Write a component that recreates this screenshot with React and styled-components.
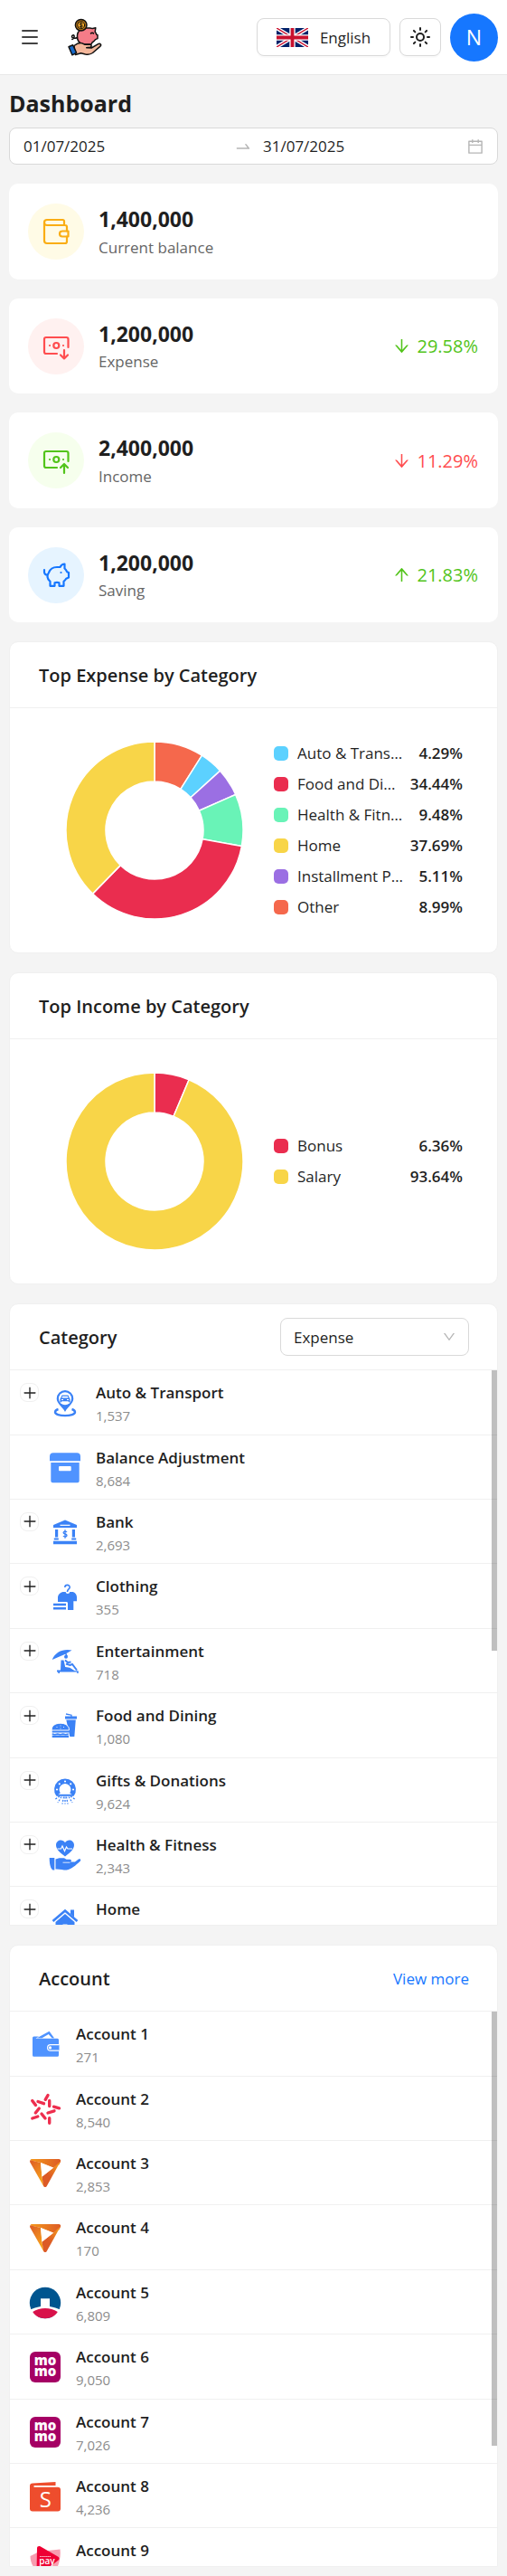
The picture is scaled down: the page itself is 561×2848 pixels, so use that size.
import React from "react";
import styled, { createGlobalStyle } from "styled-components";
import {
  AiOutlineArrowDown,
  AiOutlineArrowUp,
  AiOutlineCalendar,
  AiOutlineDown,
  AiOutlinePlus,
  AiOutlineSwapRight,
} from "react-icons/ai";
import { Sun } from "lucide-react";

const GlobalStyle = createGlobalStyle`
  *, *::before, *::after { box-sizing: border-box; }
  body {
    margin: 0;
    background: #f4f4f4;
    color: #1f1f1f;
    font-family: "Open Sans", "Noto Sans", sans-serif;
    font-size: 17px;
  }
  button, input, select { font: inherit; color: inherit; }
  h1, h2, p, ul { margin: 0; padding: 0; }
  ul { list-style: none; }
`;

/* ---------- Header ---------- */

const Header = styled.header`
  display: flex;
  align-items: center;
  gap: 10px;
  height: 83px;
  padding: 0 10px;
  background: #fff;
  border-bottom: 1px solid #e8e8e8;
`;

const MenuButton = styled.button`
  display: flex;
  padding: 10px 14px;
  border: 0;
  background: none;
`;

const Brand = styled.a`
  display: flex;
  margin-left: 9px;
  margin-right: auto;
`;

const HeaderButton = styled.button`
  display: flex;
  align-items: center;
  justify-content: center;
  gap: 13px;
  height: 42px;
  padding: 0 ${(p) => (p.$wide ? 20 : 10)}px;
  min-width: ${(p) => (p.$wide ? 148 : 46)}px;
  background: #fff;
  border: 1px solid #d9d9d9;
  border-radius: 8px;
  box-shadow: 0 2px 0 rgba(0, 0, 0, 0.02);
`;

const Avatar = styled.button`
  width: 53px;
  height: 53px;
  padding: 0;
  border: 0;
  border-radius: 50%;
  background: #1677ff;
  color: #fff;
  font-size: 23px;
`;

/* ---------- Page ---------- */

const Main = styled.main`
  display: flex;
  flex-direction: column;
  gap: 21px;
  padding: 13px 10px 10px;
`;

const Intro = styled.div`
  display: flex;
  flex-direction: column;
  gap: 9px;
`;

const PageTitle = styled.h1`
  font-size: 25px;
  line-height: 36px;
  font-weight: 700;
`;

const RangePicker = styled.div`
  display: flex;
  align-items: center;
  gap: 12px;
  height: 41px;
  padding: 0 14px 0 15px;
  background: #fff;
  border: 1px solid #d9d9d9;
  border-radius: 8px;
  color: #b5b5b5;
  svg { flex: none; }
`;

const DateField = styled.label`
  flex: 1 1 ${(p) => (p.$withIcon ? 24 : 0)}px;
  min-width: 0;
  display: flex;
  align-items: center;
`;

const DateInput = styled.input`
  flex: 1;
  min-width: 0;
  padding: 0;
  border: 0;
  outline: 0;
  background: none;
  color: #1f1f1f;
`;

/* ---------- Stat cards ---------- */

const StatCard = styled.section`
  display: flex;
  align-items: center;
  gap: 16px;
  padding: 22px 22px 21px 21px;
  background: #fff;
  border-radius: 10px;
`;

const StatIcon = styled.span`
  display: flex;
  align-items: center;
  justify-content: center;
  width: 62px;
  height: 62px;
  border-radius: 50%;
  background: ${(p) => p.$bg};
  color: ${(p) => p.$fg};
`;

const StatText = styled.div`
  flex: 1;
`;

const StatValue = styled.p`
  font-size: 23px;
  line-height: 1.5;
  font-weight: 700;
`;

const StatLabel = styled.p`
  line-height: 1.65;
  color: #666;
`;

const Trend = styled.span`
  display: flex;
  align-items: center;
  gap: 6px;
  font-size: 20px;
  font-weight: 500;
  color: ${(p) => (p.$good ? "#52c41a" : "#ff4d4f")};
`;

/* ---------- Panels ---------- */

const Panel = styled.section`
  background: #fff;
  border: 1px solid #f0f0f0;
  border-radius: ${(p) => (p.$flatBottom ? "10px 10px 0 0" : "10px")};
`;

const PanelHeader = styled.header`
  display: flex;
  align-items: center;
  justify-content: space-between;
  height: 73px;
  padding: 0 31px 0 32px;
  border-bottom: 1px solid #f0f0f0;
`;

const PanelTitle = styled.h2`
  font-size: 20px;
  font-weight: 600;
`;

const ChartBody = styled.div`
  display: flex;
  align-items: center;
  gap: 34px;
  height: 270px;
  padding: 0 38px 0 62px;
`;

const Legend = styled.ul`
  flex: 1;
  min-width: 0;
  display: flex;
  flex-direction: column;
  gap: 10px;
`;

const LegendRow = styled.li`
  display: flex;
  align-items: center;
  line-height: 24px;
`;

const Swatch = styled.span`
  flex: none;
  width: 16px;
  height: 16px;
  margin-right: 10px;
  border-radius: 5px;
  background: ${(p) => p.$color};
`;

const LegendLabel = styled.span`
  flex: 1;
  min-width: 0;
  overflow: hidden;
  white-space: nowrap;
  text-overflow: ellipsis;
`;

const LegendValue = styled.span`
  margin-left: 14px;
  font-weight: 600;
`;

const SelectBox = styled.span`
  position: relative;
  display: flex;
  align-items: center;
  width: 209px;
  svg {
    position: absolute;
    right: 14px;
    color: #b5b5b5;
    pointer-events: none;
  }
`;

const Select = styled.select`
  appearance: none;
  width: 100%;
  height: 42px;
  padding: 0 14px;
  background: #fff;
  border: 1px solid #d9d9d9;
  border-radius: 8px;
`;

const MoreLink = styled.a`
  color: #1677ff;
  text-decoration: none;
`;

const ListViewport = styled.div`
  position: relative;
  height: 613px;
  overflow: hidden;
`;

const ScrollThumb = styled.span`
  position: absolute;
  top: 0;
  right: 0;
  width: 6px;
  height: ${(p) => p.$size}px;
  background: rgba(0, 0, 0, 0.25);
`;

const ListRow = styled.li`
  display: flex;
  align-items: center;
  padding: 11px 10px 9px ${(p) => (p.$nested ? 11 : 21)}px;
  border-bottom: 1px solid #f0f0f0;
`;

const ExpandSlot = styled.span`
  align-self: flex-start;
  width: 32px;
  padding-top: 3px;
`;

const ExpandButton = styled.button`
  display: flex;
  align-items: center;
  justify-content: center;
  width: 21px;
  height: 21px;
  padding: 0;
  background: #fff;
  border: 1px solid #f0f0f0;
  border-radius: 8px;
  svg { flex: none; }
`;

const RowIcon = styled.svg`
  flex: none;
  width: 36px;
  height: 36px;
  margin-right: 16px;
`;

const RowName = styled.p`
  line-height: 1.65;
  font-weight: 600;
`;

const RowAmount = styled.p`
  font-size: 15px;
  line-height: 1.49;
  color: #8c8c8c;
`;

/* ---------- Header drawings ---------- */

const MenuIcon = () => (
  <svg width="18" height="16" viewBox="0 0 18 16" stroke="#434343" strokeWidth="2" strokeLinecap="round">
    <path d="M1 1h16M1 8h16M1 15h16" />
  </svg>
);

const Logo = () => (
  <svg width="38" height="42" viewBox="0 0 38 42" stroke="#111" strokeWidth="1.5" strokeLinejoin="round" strokeLinecap="round">
    <path d="M10.500 19c.5-4.500 4-8 9-8h5c1 0 2 .3 3 .6l3.300-.8-.6 4.400c.8.900 1.200 1.900 1.600 3l1.200.4v4l-2.400 1c-1 1.500-2.200 2.600-3.600 3.400l-1 2h-9.500c-4-1.500-6.500-5-6-10z" fill="#f57c88" />
    <path d="M25.500 17c.6-1 2.400-1 3 0" fill="none" />
    <path d="M10.500 21.500c-3 1.500-6 .5-6-1s2-2.300 2.600-.9c.5 1.300-.9 3.200-2.300 3.900" fill="none" />
    <circle cx="14.700" cy="7.700" r="6.300" fill="#b87412" />
    <circle cx="14.700" cy="7.700" r="4" fill="#f7a928" strokeWidth="1" />
    <path d="M16.300 6c-1-.9-3-.7-3 .6 0 1.500 3 .8 3 2.300 0 1.300-2 1.500-3.100.5M14.800 4.800v5.900" fill="none" strokeWidth=".9" />
    <path d="M7 30.500c3-2.300 6-3.500 9-2.600l3 1.300h5.500c2 0 2.300 2.600.2 3l-4 .5 5.500.3 7.500-4.300c2-1 3.900.6 2.300 2.400l-8.500 7.400c-2.500 1.700-5 2-8 1.400l-5-1.200-6 1.800z" fill="#f4b79b" />
    <path d="M1 31.800l4.600-2.100 4 8.600-4.700 2.500z" fill="#1769c9" />
  </svg>
);

const Flag = () => (
  <svg width="35" height="21" viewBox="0 0 60 36" preserveAspectRatio="none">
    <path fill="#012169" d="M0 0h60v36H0z" />
    <path d="M0 0l60 36M60 0L0 36" stroke="#fff" strokeWidth="7" />
    <path d="M0 0l60 36M60 0L0 36" stroke="#c8102e" strokeWidth="2.500" />
    <path d="M30 0v36M0 18h60" stroke="#fff" strokeWidth="11" />
    <path d="M30 0v36M0 18h60" stroke="#c8102e" strokeWidth="6.500" />
  </svg>
);

/* ---------- Stat drawings ---------- */

const strokeProps = {
  width: 32,
  height: 32,
  viewBox: "0 0 32 32",
  fill: "none",
  stroke: "currentColor",
  strokeWidth: 2.2,
  strokeLinecap: "round",
  strokeLinejoin: "round",
};

const WalletIcon = () => (
  <svg {...strokeProps}>
    <path d="M25 9V4.500a1.500 1.500 0 0 0-1.500-1.500H6a3 3 0 0 0 0 6h20a2 2 0 0 1 2 2v4.500M28 21.500V27a2 2 0 0 1-2 2H6a3 3 0 0 1-3-3V6" />
    <path d="M29.500 15.500v6h-6.500a3 3 0 0 1 0-6z" />
  </svg>
);

const CashIcon = ({ up }) => (
  <svg {...strokeProps}>
    <path d="M17 24H5a2 2 0 0 1-2-2V8a2 2 0 0 1 2-2h22.500a2 2 0 0 1 2 2v9" />
    <circle cx="16.300" cy="15" r="3" />
    <path d="M9 15h.01M24 15h.01" />
    <path d={up ? "M25 30v-9.500M21 24l4-4 4 4" : "M25 20v9.500M21 25.500l4 4 4-4"} />
  </svg>
);

const PigIcon = () => (
  <svg {...strokeProps}>
    <path d="M3 10v2.500a3 3 0 0 0 3 3M8 13c1.500-4 5-6 9-6h3.500c1-2 3-3.500 5-3.500v5c1.200 1 2 2.200 2.600 3.700l1.900.8v5.500l-2.800 1.200c-.8 1.400-1.700 2.300-2.700 3.100v5h-5v-3.500c-1.500-.6-3.500-.6-5 0v3.500h-5v-5c-3-2.500-4-6-1.500-9.800z" />
    <path d="M21.500 13h.01" />
  </svg>
);

/* ---------- Donut chart ---------- */

const DonutSvg = styled.svg`
  flex: none;
  width: 196px;
  height: 196px;
`;

const point = (r, share) => {
  const a = share * 2 * Math.PI;
  return `${(98 + r * Math.sin(a)).toFixed(2)} ${(98 - r * Math.cos(a)).toFixed(2)}`;
};

const Donut = ({ slices, label }) => {
  let at = 0;
  return (
    <DonutSvg viewBox="0 0 196 196" role="img" aria-label={label}>
      {slices.map((s) => {
        const from = at;
        const to = (at += s.value / 100);
        const big = to - from > 0.5 ? 1 : 0;
        return (
          <path
            key={s.name}
            fill={s.color}
            stroke="#fff"
            strokeWidth="1.500"
            d={`M${point(98, from)}A98 98 0 ${big} 1 ${point(98, to)}L${point(54, to)}A54 54 0 ${big} 0 ${point(54, from)}Z`}
          />
        );
      })}
    </DonutSvg>
  );
};

/* ---------- Category drawings (36 x 36) ---------- */

const BLUE = "#3b82f6";

const icons = {
  transport: (
    <>
      <path fill={BLUE} d="M18 4a9.300 9.300 0 0 0-9.300 9.300c0 5.700 6.300 8.700 9.300 14.700 3-6 9.300-9 9.300-14.700A9.300 9.300 0 0 0 18 4z" />
      <circle cx="18" cy="13.300" r="7" fill="#fff" />
      <path fill={BLUE} d="M14.500 9.500h7l1.300 3 .7.800v4h-1.700v-1h-7.600v1h-1.700v-4l.7-.8zm.6 1.200l-.7 1.800h7.200l-.7-1.800zM14 14v1h2v-1zm6 0v1h2v-1z" />
      <path fill="none" stroke={BLUE} strokeWidth="2.400" d="M10.500 25c-2.300.7-3.500 1.800-3.500 3.200 0 2.300 5 3.900 11 3.900s11-1.600 11-3.900c0-1.400-1.200-2.500-3.500-3.200" />
    </>
  ),
  balance: (
    <g fill="#4f93ff">
      <path d="M5 1.300h26a4 4 0 0 1 4 4v5H1v-5a4 4 0 0 1 4-4z" />
      <path fillRule="evenodd" d="M2.300 12h31.400v20.300a2 2 0 0 1-2 2H4.300a2 2 0 0 1-2-2zM12 16a1 1 0 0 0-1 1v3.300a1 1 0 0 0 1 1h11.700a1 1 0 0 0 1-1V17a1 1 0 0 0-1-1z" />
    </g>
  ),
  bank: (
    <>
      <path fill={BLUE} d="M18 4.500L31 10v3H5v-3zM7 15h3.200v8.500H7zM25.800 15H29v8.500h-3.200zM5.800 24.500h5v2h-5zM25.200 24.500h5v2h-5zM5 27.800h26v3.500H5z" />
      <path stroke="#fff" strokeWidth="1.200" d="M12.500 10.300h11" />
      <path fill="none" stroke={BLUE} strokeWidth="1.300" d="M20 17.800c-1-1.200-3.900-1-3.900.8s3.900 1 3.900 2.900-2.900 1.900-4.100.6M18 15.200v9.500" />
    </>
  ),
  clothing: (
    <>
      <path fill="none" stroke={BLUE} strokeWidth="1.600" d="M17.800 7c0-3.500 5.600-3.500 5.400 0-.1 2-3 2-2.700 5" />
      <path fill={BLUE} d="M15.500 12h3.200c0 2.500 4.500 2.500 4.500 0h3.500c2.500.8 4 2.500 4.300 5.500v4.700h-3.700V32H21v-7.500c0-1.300-1-1.500-2-1.500h-9v-5.500c.5-3 2.500-4.700 5.500-5.500zM5 24.700h14v2.600H5zM5 29h14v2.600H5z" />
    </>
  ),
  entertainment: (
    <>
      <path fill={BLUE} d="M3.700 16C7 7.500 16 3.500 25.500 5.500l-6 3.500 1.200 3-1.500.4-1-2.600zM13.500 16.500h3l1.700 7.500 5 .8 5.500 3.500h4V31h-1.500v-1.400H12V31h-1.700v-1.500H9v-2h4z" />
      <circle cx="19" cy="12.800" r="2" fill={BLUE} />
      <path fill="none" stroke={BLUE} strokeWidth="2" d="M18 16.500l3 2.500 3.500-.5M19 20.500l4.500 1.500 2.500-1 5 6.500" />
    </>
  ),
  food: (
    <>
      <path fill={BLUE} d="M18 7.500h13v3H18zM19.300 11.500h10.500L28.300 30h-5z" />
      <path fill="none" stroke={BLUE} strokeWidth="1.300" d="M19 5l6 1.200v3" />
      <path fill={BLUE} stroke="#fff" strokeWidth="1" d="M3.200 23c-.5-5 4-7.800 9.600-7.800S22.900 18 22.400 23z" />
      <path fill={BLUE} d="M3.700 23.500h18.300v2H3.700zM3.700 28.500h18.300V31H3.700z" />
      <path fill="none" stroke={BLUE} strokeWidth="1.400" d="M3.700 27l3 .8 3-.8 3 .8 3-.8 3 .8 3-.8" />
      <path stroke="#fff" strokeWidth="1" strokeLinecap="round" d="M9 19.500h.01M13 18h.01M16.500 19.500h.01M13 21h.01" />
    </>
  ),
  gifts: (
    <>
      <path fill="none" stroke={BLUE} strokeWidth="5.500" d="M10.500 21.800a9.200 9.200 0 1 1 15 0" />
      <path fill="none" stroke={BLUE} strokeWidth="2" d="M8.500 22.800h19" />
      <path fill="none" stroke="#fff" strokeWidth="2.200" strokeLinecap="round" d="M18 7.500h.01M11.800 10.300h.01M24.200 10.300h.01M9 16.500h.01M27 16.500h.01" />
      <path fill="none" stroke={BLUE} strokeWidth="1.300" strokeDasharray="2 1.500" d="M12 24l-5.500 3.500M14 24.500L10 31M16.500 24.500l-1.500 8M19.500 24.500l1.500 8M22 24.500l4 6.500M24 24l5.500 3.500M18 24.500v8" />
    </>
  ),
  health: (
    <>
      <path fill={BLUE} d="M18 19.500C12 15 8 11.500 8 6.800 8 1 15.500-.5 18 4.200c2.500-4.700 10-3.200 10 2.600 0 4.700-4 8.200-10 12.700z" />
      <path fill="none" stroke="#fff" strokeWidth="1.200" d="M9.500 11h4l1.500-3 2.500 5.500 2-4.500 1.500 2H26" />
      <path fill={BLUE} d="M.7 21h5.600v13.500H4.500C2 33 .7 28 .7 21zM7.500 22.500l4-1.200h5.500l2.500 1.500h4c1.600 0 2 2.400.4 2.800h5l4-3c1.800-.9 3.200.8 1.800 2.200-5 4.500-10 9.200-15 9.700-4 0-8-1.300-12.200-1z" />
      <path stroke="#fff" strokeWidth=".8" d="M15.500 26.200h8" />
    </>
  ),
  home: (
    <>
      <path fill="none" stroke={BLUE} strokeWidth="2.600" d="M4.500 19L18 7.500 31.500 19" />
      <path fill={BLUE} d="M24 6.500h4v8l-4-3.500zM18 11l10.500 9v12h-8V22.500h-5V32h-8V20z" />
    </>
  ),
  wallet: (
    <>
      <path fill="#4f93ff" d="M12 9.500L22.500 3.700l5.500 7.500h-2.500l-3.800-4.200-7.200 4.200H9zM5.500 9.500H11l-3.500 2.200h24a1.500 1.500 0 0 1 1.500 1.500v17a1.500 1.500 0 0 1-1.500 1.500h-26A1.500 1.500 0 0 1 4 30.200V11a1.500 1.500 0 0 1 1.500-1.500z" />
      <path fill="#4f93ff" stroke="#fff" strokeWidth="1.200" d="M33.500 18.700H23.800a3.200 3.200 0 0 0 0 6.400h9.700" />
      <circle cx="23.500" cy="21.900" r="1.600" fill="#fff" />
    </>
  ),
  star: (
    <path
      fill="none"
      stroke="#ee2e4e"
      strokeWidth="3.400"
      strokeLinecap="round"
      d="M21 2.500l-2.800 4.800M3.700 8.500l3.800 5M10 9.500l6.500 2.200M22.700 8.500v6M27.500 15.200l6 1.600M11.300 17l-4 5M28 19.800l-7 2.200M3.800 28l6-2M14 23l4 5M22.700 27.800v5.400"
    />
  ),
  triangle: (
    <>
      <defs>
        <linearGradient id="triTop" x1="0" x2="1">
          <stop offset="0" stopColor="#f59a1b" />
          <stop offset="1" stopColor="#dc5a26" />
        </linearGradient>
        <linearGradient id="triLeft" x1="0" y1="0" x2=".6" y2="1">
          <stop offset="0" stopColor="#dc5a26" />
          <stop offset="1" stopColor="#f9a51a" />
        </linearGradient>
        <linearGradient id="triRight" x1="1" y1="0" x2="0" y2="1">
          <stop offset="0" stopColor="#f9a51a" />
          <stop offset=".6" stopColor="#dc5a26" />
        </linearGradient>
      </defs>
      <path fill="url(#triTop)" d="M3 2h30c1.800 0 2.700 1.500 2 3l-1.500 3-6.500 3.500L13 6 1.500 3.500C1.800 2.500 2.300 2 3 2z" />
      <path fill="url(#triLeft)" d="M1.500 3.200L13 6l1.500 16 2 10.500L1.200 5.500c-.3-.8-.2-1.700.3-2.300z" />
      <path fill="url(#triRight)" d="M27 11.500L35 4.500 20 31.500c-1 2-3 2-4 0l-1.500-10z" />
      <path fill="#fff" d="M13 6l14 5.700-12.500 9.800z" />
    </>
  ),
  harbour: (
    <>
      <circle cx="18" cy="18" r="17.200" fill="#00558f" />
      <path fill="#fff" d="M13 13.300h10V22c4.500.8 8.500 2 11.500 3.500L30 33H6L1.500 25.500C4.500 24 8.500 22.800 13 22z" />
      <path fill="#d8114a" d="M4.200 28c8-5.400 19.600-5.400 27.600 0-6 9.600-21.600 9.600-27.600 0z" />
    </>
  ),
  momo: (
    <>
      <rect x="1" y="1" width="34" height="34" rx="6" fill="#a50064" />
      <g fill="#fff" fontFamily="Open Sans" fontWeight="800" fontSize="15" textAnchor="middle">
        <text x="18" y="16">mo</text>
        <text x="18" y="28">mo</text>
      </g>
    </>
  ),
  shop: (
    <>
      <path fill="#ee4d2d" d="M1 6.500C1 4.500 2 3.700 4 3.500L29.500 2v4H5.500v1.800H32a3 3 0 0 1 3 3v20.700a3 3 0 0 1-3 3H4a3 3 0 0 1-3-3z" />
      <text x="18.300" y="30" fill="#fff" fontFamily="Open Sans" fontSize="24" textAnchor="middle">S</text>
    </>
  ),
  pay: (
    <>
      <path fill="#f79db0" d="M1.500 12l10-5 23-2.500c1 8-1 16-4 22L8 27c-4-3-6.500-9-6.500-15z" />
      <path fill="#ee0033" d="M9 3.500C9 1 11 .5 13 1.500l19 11c2 1.200 2 3 .3 4.300L12 32c-2 1-3.500.3-3.500-2z" />
      <text x="20" y="21" fill="#fff" fontFamily="Open Sans" fontWeight="600" fontSize="10" textAnchor="middle">pay</text>
      <path stroke="#fff" strokeWidth=".8" strokeDasharray="1.500 .6" d="M12 12.500h12" />
    </>
  ),
};

/* ---------- Data ---------- */

const stats = [
  { value: "1,400,000", label: "Current balance", icon: <WalletIcon />, bg: "#fffbe6", fg: "#faad14" },
  { value: "1,200,000", label: "Expense", icon: <CashIcon />, bg: "#fff1f0", fg: "#ff4d4f", trend: "29.58%", good: true },
  { value: "2,400,000", label: "Income", icon: <CashIcon up />, bg: "#f6ffed", fg: "#52c41a", trend: "11.29%" },
  { value: "1,200,000", label: "Saving", icon: <PigIcon />, bg: "#e6f4ff", fg: "#1677ff", trend: "21.83%", good: true, up: true },
];

const auto = { name: "Auto & Transport", value: 4.29, color: "#5cd1ff" };
const food = { name: "Food and Dining", value: 34.44, color: "#ea2d4f" };
const fitness = { name: "Health & Fitness", value: 9.48, color: "#69f3b7" };
const home = { name: "Home", value: 37.69, color: "#f8d548" };
const installment = { name: "Installment Payment", value: 5.11, color: "#9b6fe3" };
const other = { name: "Other", value: 8.99, color: "#f5684c" };
const bonus = { name: "Bonus", value: 6.36, color: "#ea2d4f" };
const salary = { name: "Salary", value: 93.64, color: "#f8d548" };

const charts = [
  {
    title: "Top Expense by Category",
    slices: [other, auto, installment, fitness, food, home],
    legend: [auto, food, fitness, home, installment, other],
  },
  { title: "Top Income by Category", slices: [bonus, salary], legend: [bonus, salary] },
];

const categories = [
  ["Auto & Transport", "1,537", "transport", true],
  ["Balance Adjustment", "8,684", "balance", false],
  ["Bank", "2,693", "bank", true],
  ["Clothing", "355", "clothing", true],
  ["Entertainment", "718", "entertainment", true],
  ["Food and Dining", "1,080", "food", true],
  ["Gifts & Donations", "9,624", "gifts", true],
  ["Health & Fitness", "2,343", "health", true],
  ["Home", "1,905", "home", true],
];

const accounts = [
  ["Account 1", "271", "wallet"],
  ["Account 2", "8,540", "star"],
  ["Account 3", "2,853", "triangle"],
  ["Account 4", "170", "triangle"],
  ["Account 5", "6,809", "harbour"],
  ["Account 6", "9,050", "momo"],
  ["Account 7", "7,026", "momo"],
  ["Account 8", "4,236", "shop"],
  ["Account 9", "3,118", "pay"],
];

const RowContent = ({ icon, name, amount }) => (
  <>
    <RowIcon viewBox="0 0 36 36" aria-hidden="true">{icons[icon]}</RowIcon>
    <div>
      <RowName>{name}</RowName>
      <RowAmount>{amount}</RowAmount>
    </div>
  </>
);

export default function App() {
  return (
    <>
      <GlobalStyle />
      <Header>
        <MenuButton aria-label="Menu"><MenuIcon /></MenuButton>
        <Brand href="#" aria-label="Home"><Logo /></Brand>
        <HeaderButton $wide><Flag />English</HeaderButton>
        <HeaderButton aria-label="Toggle theme"><Sun size={24} /></HeaderButton>
        <Avatar>N</Avatar>
      </Header>
      <Main>
        <Intro>
          <PageTitle>Dashboard</PageTitle>
          <RangePicker>
            <DateField>
              <DateInput aria-label="Start date" defaultValue="01/07/2025" />
            </DateField>
            <AiOutlineSwapRight size={20} />
            <DateField $withIcon>
              <DateInput aria-label="End date" defaultValue="31/07/2025" />
              <AiOutlineCalendar size={20} />
            </DateField>
          </RangePicker>
        </Intro>

        {stats.map((s) => (
          <StatCard key={s.label}>
            <StatIcon $bg={s.bg} $fg={s.fg}>{s.icon}</StatIcon>
            <StatText>
              <StatValue>{s.value}</StatValue>
              <StatLabel>{s.label}</StatLabel>
            </StatText>
            {s.trend && (
              <Trend $good={s.good}>
                {s.up ? <AiOutlineArrowUp size={21} /> : <AiOutlineArrowDown size={21} />}
                {s.trend}
              </Trend>
            )}
          </StatCard>
        ))}

        {charts.map((c) => (
          <Panel key={c.title}>
            <PanelHeader><PanelTitle>{c.title}</PanelTitle></PanelHeader>
            <ChartBody>
              <Donut slices={c.slices} label={c.title} />
              <Legend>
                {c.legend.map((s) => (
                  <LegendRow key={s.name}>
                    <Swatch $color={s.color} />
                    <LegendLabel>{s.name}</LegendLabel>
                    <LegendValue>{s.value.toFixed(2)}%</LegendValue>
                  </LegendRow>
                ))}
              </Legend>
            </ChartBody>
          </Panel>
        ))}

        <Panel $flatBottom>
          <PanelHeader>
            <PanelTitle>Category</PanelTitle>
            <SelectBox>
              <Select aria-label="Category type" defaultValue="Expense">
                <option>Expense</option>
                <option>Income</option>
              </Select>
              <AiOutlineDown size={16} />
            </SelectBox>
          </PanelHeader>
          <ListViewport>
            <ul>
              {categories.map(([name, amount, icon, expandable]) => (
                <ListRow key={name} $nested>
                  <ExpandSlot>
                    {expandable && (
                      <ExpandButton aria-label={`Expand ${name}`}><AiOutlinePlus size={18} /></ExpandButton>
                    )}
                  </ExpandSlot>
                  <RowContent icon={icon} name={name} amount={amount} />
                </ListRow>
              ))}
            </ul>
            <ScrollThumb $size={310} />
          </ListViewport>
        </Panel>

        <Panel $flatBottom>
          <PanelHeader>
            <PanelTitle>Account</PanelTitle>
            <MoreLink href="#">View more</MoreLink>
          </PanelHeader>
          <ListViewport>
            <ul>
              {accounts.map(([name, amount, icon]) => (
                <ListRow key={name}>
                  <RowContent icon={icon} name={name} amount={amount} />
                </ListRow>
              ))}
            </ul>
            <ScrollThumb $size={480} />
          </ListViewport>
        </Panel>
      </Main>
    </>
  );
}
